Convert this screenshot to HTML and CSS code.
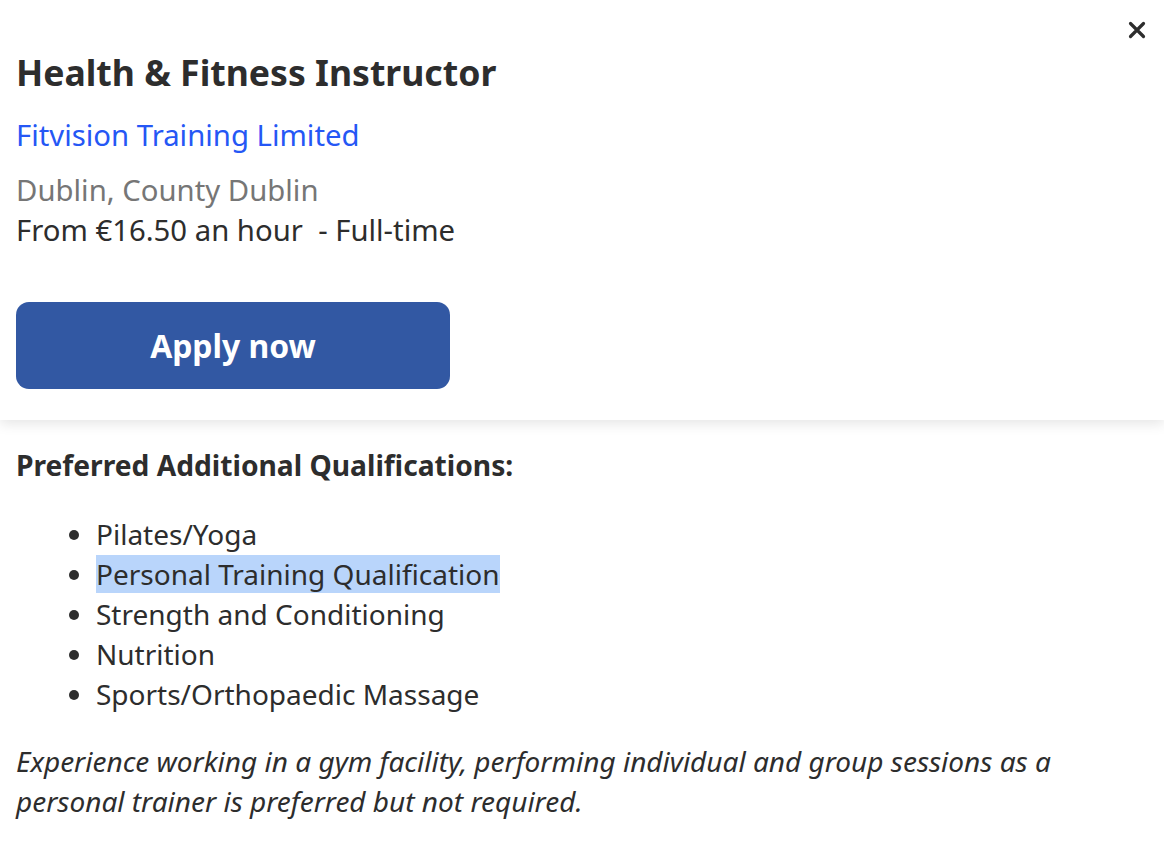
FILE: index.html
```html
<!DOCTYPE html>
<html lang="en">
<head>
<meta charset="utf-8">
<title>Health &amp; Fitness Instructor</title>
<link rel="stylesheet" href="styles.css">
</head>
<body>
<header class="job-header">
  <button class="close" aria-label="Close">
    <svg width="18" height="18" viewBox="0 0 18 18" aria-hidden="true"><path d="M2.5 2.5 L15.5 15.5 M15.5 2.5 L2.5 15.5" stroke="#2d2d2d" stroke-width="3.2" stroke-linecap="round"/></svg>
  </button>
  <h1 class="title">Health &amp; Fitness Instructor</h1>
  <a class="company" href="#">Fitvision Training Limited</a>
  <div class="location">Dublin, County Dublin</div>
  <div class="salary">From €16.50 an hour &nbsp;- Full-time</div>
  <button class="apply">Apply now</button>
</header>
<main class="job-body">
  <h2 class="section-title">Preferred Additional Qualifications:</h2>
  <ul class="quals">
    <li>Pilates/Yoga</li>
    <li><span class="selected">Personal Training Qualification</span></li>
    <li>Strength and Conditioning</li>
    <li>Nutrition</li>
    <li>Sports/Orthopaedic Massage</li>
  </ul>
  <p class="note">Experience working in a gym facility, performing individual and group sessions as a personal trainer is preferred but not required.</p>
</main>
</body>
</html>
```
FILE: styles.css
```css
html, body {
  margin: 0;
  padding: 0;
  background: #ffffff;
}
body {
  font-family: "Noto Sans", "Open Sans", sans-serif;
  color: #2d2d2d;
  font-size: 28px;
  line-height: 40px;
  overflow: hidden;
}
.job-header {
  position: relative;
  padding: 51px 16px 31px 16px;
  display: flex;
  flex-direction: column;
  align-items: flex-start;
  box-shadow: 0 4px 12px rgba(0, 0, 0, 0.10);
  z-index: 1;
}
.close {
  position: absolute;
  top: 21px;
  right: 18px;
  background: none;
  border: 0;
  padding: 0;
  width: 18px;
  height: 18px;
  cursor: pointer;
}
.close svg { display: block; }
.title {
  margin: 0;
  font-size: 35.6px;
  line-height: 42px;
  font-weight: 700;
  color: #2d2d2d;
}
.company {
  margin-top: 22px;
  font-size: 29.3px;
  color: #2557f5;
  text-decoration: none;
}
.location {
  margin-top: 15px;
  font-size: 29.3px;
  color: #767676;
}
.salary {
  font-size: 29.3px;
  color: #2d2d2d;
}
.apply {
  margin-top: 52px;
  width: 434px;
  height: 87px;
  border: 0;
  border-radius: 13px;
  background: #3258a3;
  color: #ffffff;
  font-family: "Noto Sans", "Open Sans", sans-serif;
  font-size: 31.9px;
  font-weight: 700;
  cursor: pointer;
}
.job-body {
  padding: 25px 16px 0 16px;
}
.section-title {
  margin: 0;
  font-size: 28.2px;
  line-height: 40px;
  font-weight: 700;
}
.quals {
  margin: 29px 0 0 0;
  padding-left: 80px;
}
.quals li {
  line-height: 40px;
}
.selected {
  background: #b9d5fb;
}
.note {
  margin: 27px 0 0 0;
  font-style: italic;
}
```
